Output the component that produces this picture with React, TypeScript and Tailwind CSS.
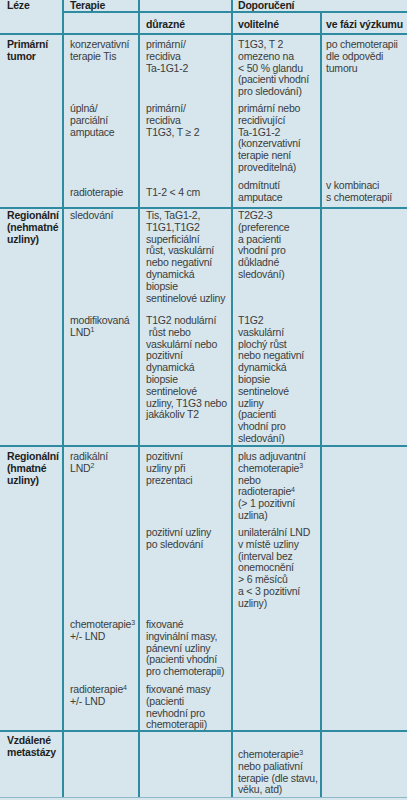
import React from 'react';

type Lines = React.ReactNode[];

type Sub = {
  h: string;
  pt: string;
  cells: Lines[];
  mid?: boolean[];
  pts?: (string | undefined)[];
};

type Group = {
  label: string[];
  labelPt: string;
  subs: Sub[];
  last?: boolean;
};

const cols = [
  'w-[76px] shrink-0 pl-[6px] border-r-2 border-[#2f8ba0]',
  'w-[93px] shrink-0 pl-[6px] border-r-2 border-[#2f8ba0]',
  'w-[89px] shrink-0 pl-[5px] border-r-2 border-[#2f8ba0]',
  'flex-1 pl-[4px]',
];

const groups: Group[] = [
  {
    label: ['Primární', 'tumor'],
    labelPt: 'pt-[4px]',
    subs: [
      {
        h: 'h-[66px]',
        pt: 'pt-[4px]',
        cells: [
          ['konzervativní', 'terapie Tis'],
          ['primární/', 'recidiva', 'Ta-1G1-2'],
          ['T1G3, T 2', 'omezeno na', '< 50 % glandu', '(pacienti vhodní', 'pro sledování)'],
          ['po chemoterapii', 'dle odpovědi', 'tumoru'],
        ],
      },
      {
        h: 'h-[77px]',
        pt: 'pt-[2px]',
        cells: [
          ['úplná/', 'parciální', 'amputace'],
          ['primární/', 'recidiva', 'T1G3, T ≥ 2'],
          ['primární nebo', 'recidivující', 'Ta-1G1-2', '(konzervativní', 'terapie není', 'proveditelná)'],
          [],
        ],
      },
      {
        h: 'h-[29px]',
        pt: 'pt-[2px]',
        mid: [true, true, false, false],
        cells: [
          ['radioterapie'],
          ['T1-2 < 4 cm'],
          ['odmítnutí', 'amputace'],
          ['v kombinaci', 's chemoterapií'],
        ],
      },
    ],
  },
  {
    label: ['Regionální', '(nehmatné', 'uzliny)'],
    labelPt: 'pt-[1px]',
    subs: [
      {
        h: 'h-[104px]',
        pt: 'pt-[1px]',
        cells: [
          ['sledování'],
          ['Tis, TaG1-2,', 'T1G1,T1G2', 'superficiální', 'růst, vaskulární', 'nebo negativní', 'dynamická', 'biopsie', 'sentinelové uzliny'],
          ['T2G2-3', '(preference', 'a pacienti', 'vhodní pro', 'důkladné', 'sledování)'],
          [],
        ],
      },
      {
        h: 'h-[132px]',
        pt: 'pt-[2px]',
        cells: [
          ['modifikovaná', <>LND<sup className="text-[7px]">1</sup></>],
          ['T1G2 nodulární', '\u00a0růst nebo', 'vaskulární nebo', 'pozitivní', 'dynamická', 'biopsie', 'sentinelové', 'uzliny, T1G3 nebo', 'jakákoliv T2'],
          ['T1G2', 'vaskulární', 'plochý růst', 'nebo negativní', 'dynamická', 'biopsie', 'sentinelové', 'uzliny', '(pacienti', 'vhodní pro', 'sledování)'],
          [],
        ],
      },
    ],
  },
  {
    label: ['Regionální', '(hmatné', 'uzliny)'],
    labelPt: 'pt-[4px]',
    subs: [
      {
        h: 'h-[78px]',
        pt: 'pt-[4px]',
        cells: [
          ['radikální', <>LND<sup className="text-[7px]">2</sup></>],
          ['pozitivní', 'uzliny při', 'prezentaci'],
          [
            'plus adjuvantní',
            <>chemoterapie<sup className="text-[7px]">3</sup></>,
            'nebo',
            <>radioterapie<sup className="text-[7px]">4</sup></>,
            '(> 1 pozitivní',
            'uzlina)',
          ],
          [],
        ],
      },
      {
        h: 'h-[92px]',
        pt: 'pt-[2px]',
        cells: [
          [],
          ['pozitivní uzliny', 'po sledování'],
          ['unilaterální LND', 'v místě uzliny', '(interval bez', 'onemocnění', '> 6 měsíců', 'a < 3 pozitivní', 'uzliny)'],
          [],
        ],
      },
      {
        h: 'h-[65px]',
        pt: 'pt-[2px]',
        cells: [
          [<>chemoterapie<sup className="text-[7px]">3</sup></>, '+/- LND'],
          ['fixované', 'ingvinální masy,', 'pánevní uzliny', '(pacienti vhodní', 'pro chemoterapii)'],
          [],
          [],
        ],
      },
      {
        h: 'h-[48px]',
        pt: 'pt-[2px]',
        cells: [
          [<>radioterapie<sup className="text-[7px]">4</sup></>, '+/- LND'],
          ['fixované masy', '(pacienti', 'nevhodní pro', 'chemoterapii)'],
          [],
          [],
        ],
      },
    ],
  },
  {
    label: ['Vzdálené', 'metastázy'],
    labelPt: 'pt-[3px]',
    last: true,
    subs: [
      {
        h: 'h-[65px]',
        pt: 'pt-[3px]',
        pts: [undefined, undefined, 'pt-[17px]', undefined],
        cells: [
          [],
          [],
          [
            <>chemoterapie<sup className="text-[7px]">3</sup></>,
            'nebo paliativní',
            'terapie (dle stavu,',
            'věku, atd)',
          ],
          [],
        ],
      },
    ],
  },
];

function Text({ lines }: { lines: Lines }) {
  return (
    <>
      {lines.map((l, i) => (
        <div key={i} className="whitespace-nowrap">
          {l}
        </div>
      ))}
    </>
  );
}

export default function App() {
  return (
    <div
      className="w-[407px] h-[800px] overflow-hidden bg-[#d6e6ec] text-[10.5px] leading-[11.8px] tracking-[-0.2px] text-[#3c3c3c]"
      style={{ fontFamily: '"Liberation Sans", Arial, sans-serif' }}
    >
      {/* header */}
      <div className="flex h-[35px] border-b-2 border-[#2f8ba0] font-bold text-[#1e1e1e]">
        <div className="w-[64px] shrink-0 border-r-2 border-[#2f8ba0] pl-[7px]">Léze</div>
        <div className="flex flex-1 flex-col">
          <div className="flex h-[13px] border-b-2 border-[#2f8ba0]">
            <div className={cols[0]}>Terapie</div>
            <div className={cols[1]} />
            <div className="flex-1 pl-[5px]">Doporučení</div>
          </div>
          <div className="flex flex-1">
            <div className={cols[0]} />
            <div className={`${cols[1]} pt-[6px]`}>důrazné</div>
            <div className={`${cols[2]} pt-[6px]`}>volitelné</div>
            <div className={`${cols[3]} pt-[6px] whitespace-nowrap`}>ve fázi výzkumu</div>
          </div>
        </div>
      </div>

      {groups.map((g, gi) => (
        <div
          key={gi}
          className={
            g.last
              ? 'flex border-b border-[#8cb9c7]'
              : 'flex border-b-2 border-[#2f8ba0]'
          }
        >
          <div
            className={`w-[64px] shrink-0 border-r-2 border-[#2f8ba0] pl-[7px] font-bold text-[#1e1e1e] ${g.labelPt}`}
          >
            <Text lines={g.label} />
          </div>
          <div className="flex flex-1 flex-col">
            {g.subs.map((s, si) => (
              <div key={si} className={`flex ${s.h}`}>
                {s.cells.map((c, ci) => (
                  <div
                    key={ci}
                    className={`${cols[ci]} ${
                      s.mid?.[ci] ? 'flex flex-col justify-center' : s.pts?.[ci] ?? s.pt
                    }`}
                  >
                    <Text lines={c} />
                  </div>
                ))}
              </div>
            ))}
          </div>
        </div>
      ))}
    </div>
  );
}
